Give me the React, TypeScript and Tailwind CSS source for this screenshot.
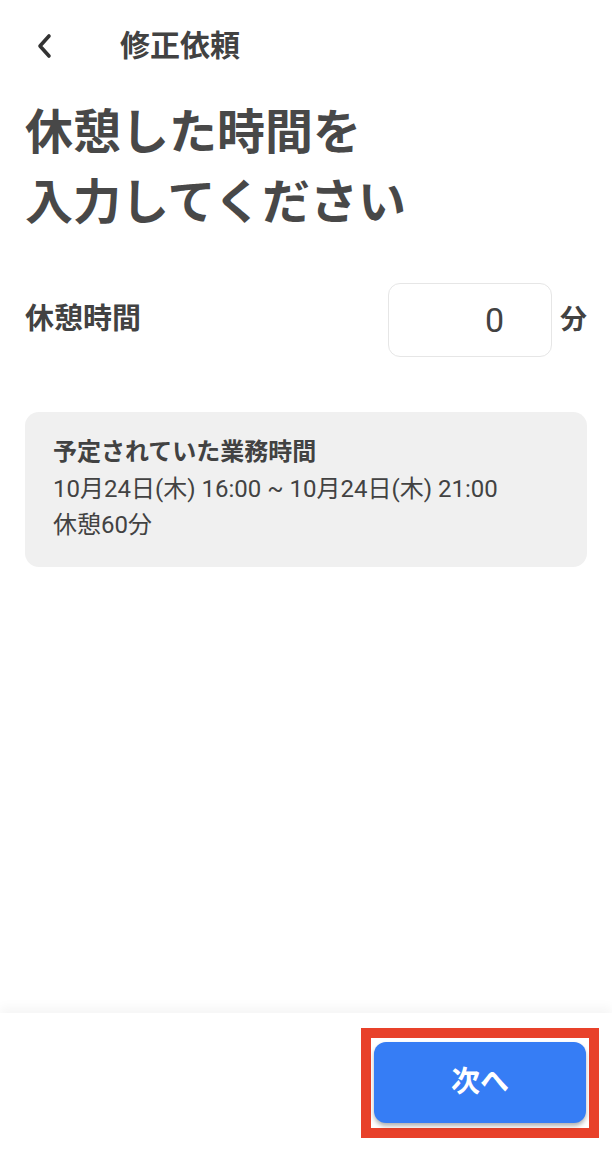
import React from 'react';

const font = { fontFamily: 'Roboto, "Noto Sans CJK JP", sans-serif' };

const BackIcon: React.FC = () => (
  <svg width="22" height="26" viewBox="0 0 22 26" fill="none">
    <polyline
      points="15,3 6,13 15,23"
      stroke="#333333"
      strokeWidth="3.6"
      strokeLinecap="round"
      strokeLinejoin="round"
    />
  </svg>
);

const App: React.FC = () => {
  return (
    <div
      className="w-[612px] h-[1174px] bg-white flex flex-col text-[#424242]"
      style={font}
    >
      {/* header */}
      <div className="h-[92px] flex items-center pl-[34px]">
        <BackIcon />
        <h1 className="ml-[64px] text-[30px] font-bold leading-none">修正依頼</h1>
      </div>

      <div className="flex-1 px-[25px]">
        <h2 className="mt-[6px] text-[48px] font-bold leading-[70px] text-[#484848]">
          休憩した時間を
          <br />
          入力してください
        </h2>

        <div className="mt-[45px] flex items-center">
          <span className="flex-1 text-[29px] font-bold">休憩時間</span>
          <div className="w-[164px] h-[74px] border-[1.5px] border-[#e6e6e6] rounded-[12px] flex items-center justify-end pr-[47px] text-[34px]">
            0
          </div>
          <span className="ml-[8px] text-[27px] font-bold">分</span>
        </div>

        <div className="mt-[55px] bg-[#f0f0f0] rounded-[14px] px-[28px] pt-[22px] pb-[24px]">
          <p className="text-[24px] font-bold leading-[37px]">予定されていた業務時間</p>
          <p className="text-[24px] leading-[36px]">
            10月24日(木) 16:00 ~ 10月24日(木) 21:00
          </p>
          <p className="text-[24px] leading-[36px]">休憩60分</p>
        </div>
      </div>

      {/* footer */}
      <div className="h-[161px] bg-white shadow-[0_-6px_10px_rgba(0,0,0,0.04)] flex justify-end items-start pt-[15px] pr-[13px]">
        <div className="border-[10px] border-[#e8412a] px-[3px] pt-[4px] pb-[5px]">
          <button className="w-[212px] h-[81px] rounded-[12px] bg-[#367df5] text-white text-[29px] font-bold shadow-[0_3px_4px_rgba(0,0,0,0.3)]">
            次へ
          </button>
        </div>
      </div>
    </div>
  );
};

export default App;
